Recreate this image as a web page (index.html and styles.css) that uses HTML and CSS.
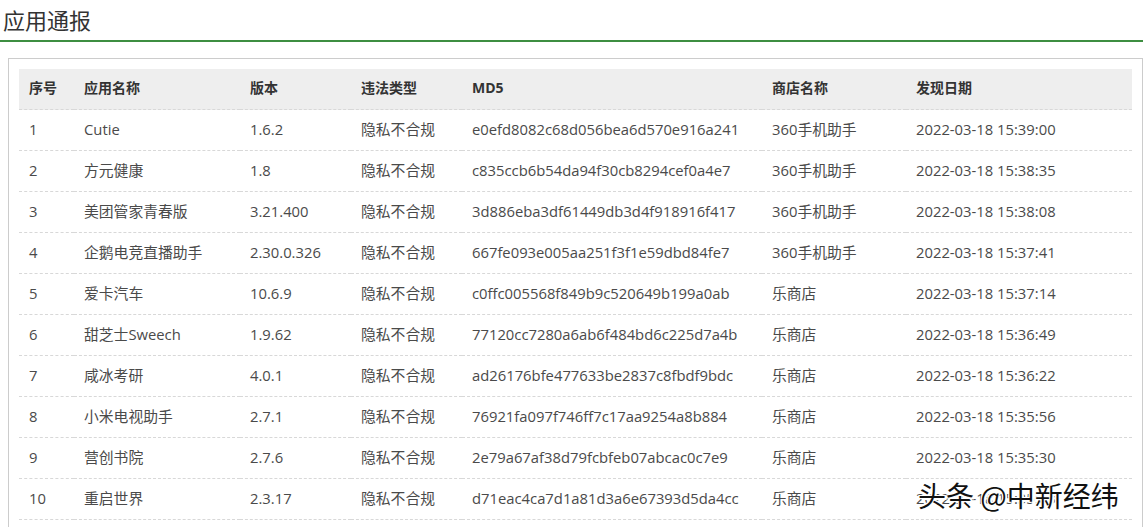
FILE: index.html
```html
<!DOCTYPE html>
<html lang="zh-CN">
<head>
<meta charset="utf-8">
<title>应用通报</title>
<link rel="stylesheet" href="styles.css">
</head>
<body>
<h2 class="page-title">应用通报</h2>
<div class="panel">
  <table class="report">
    <colgroup>
      <col class="c-no"><col class="c-name"><col class="c-ver"><col class="c-type"><col class="c-md5"><col class="c-store"><col class="c-date">
    </colgroup>
    <thead>
      <tr><th>序号</th><th>应用名称</th><th>版本</th><th>违法类型</th><th>MD5</th><th>商店名称</th><th>发现日期</th></tr>
    </thead>
    <tbody>
      <tr><td>1</td><td>Cutie</td><td>1.6.2</td><td>隐私不合规</td><td>e0efd8082c68d056bea6d570e916a241</td><td>360手机助手</td><td>2022-03-18 15:39:00</td></tr>
      <tr><td>2</td><td>方元健康</td><td>1.8</td><td>隐私不合规</td><td>c835ccb6b54da94f30cb8294cef0a4e7</td><td>360手机助手</td><td>2022-03-18 15:38:35</td></tr>
      <tr><td>3</td><td>美团管家青春版</td><td>3.21.400</td><td>隐私不合规</td><td>3d886eba3df61449db3d4f918916f417</td><td>360手机助手</td><td>2022-03-18 15:38:08</td></tr>
      <tr><td>4</td><td>企鹅电竞直播助手</td><td>2.30.0.326</td><td>隐私不合规</td><td>667fe093e005aa251f3f1e59dbd84fe7</td><td>360手机助手</td><td>2022-03-18 15:37:41</td></tr>
      <tr><td>5</td><td>爱卡汽车</td><td>10.6.9</td><td>隐私不合规</td><td>c0ffc005568f849b9c520649b199a0ab</td><td>乐商店</td><td>2022-03-18 15:37:14</td></tr>
      <tr><td>6</td><td>甜芝士Sweech</td><td>1.9.62</td><td>隐私不合规</td><td>77120cc7280a6ab6f484bd6c225d7a4b</td><td>乐商店</td><td>2022-03-18 15:36:49</td></tr>
      <tr><td>7</td><td>咸冰考研</td><td>4.0.1</td><td>隐私不合规</td><td>ad26176bfe477633be2837c8fbdf9bdc</td><td>乐商店</td><td>2022-03-18 15:36:22</td></tr>
      <tr><td>8</td><td>小米电视助手</td><td>2.7.1</td><td>隐私不合规</td><td>76921fa097f746ff7c17aa9254a8b884</td><td>乐商店</td><td>2022-03-18 15:35:56</td></tr>
      <tr><td>9</td><td>营创书院</td><td>2.7.6</td><td>隐私不合规</td><td>2e79a67af38d79fcbfeb07abcac0c7e9</td><td>乐商店</td><td>2022-03-18 15:35:30</td></tr>
      <tr><td>10</td><td>重启世界</td><td>2.3.17</td><td>隐私不合规</td><td>d71eac4ca7d1a81d3a6e67393d5da4cc</td><td>乐商店</td><td>2022-03-18 15:35:03</td></tr>
    </tbody>
  </table>
</div>
<div class="watermark">头条 @中新经纬</div>
</body>
</html>
```
FILE: styles.css
```css
html, body {
  margin: 0;
  padding: 0;
  background: #fff;
}
body {
  font-family: "Open Sans", "Noto Sans CJK SC", sans-serif;
  color: #444;
  position: relative;
  overflow: hidden;
  height: 527px;
}
.page-title {
  margin: 0 5px 0 0;
  padding: 4px 0 6px 3px;
  font-family: "Noto Sans CJK SC", sans-serif;
  font-size: 22px;
  font-weight: normal;
  line-height: 30px;
  color: #333;
  border-bottom: 2px solid #3e8e41;
}
.panel {
  margin: 16px 5px 0 8px;
  border: 1px solid #ccc;
  padding: 10px;
}
.report {
  width: 1113px;
  border-collapse: collapse;
  table-layout: fixed;
  font-size: 14.8px;
}
.c-no { width: 55px; }
.c-name { width: 166px; }
.c-ver { width: 111px; }
.c-type { width: 111px; }
.c-md5 { width: 300px; }
.c-store { width: 144px; }
.c-date { width: 226px; }
.report th, .report td {
  text-align: left;
  padding: 0 0 2px 10px;
  height: 38px;
  line-height: 20px;
  border-bottom: 1px dashed #d8d8d8;
  white-space: nowrap;
}
.report th {
  background: #eee;
  color: #333;
  font-weight: bold;
  font-size: 14px;
}
.report td {
  color: #4a4a4a;
}
.watermark {
  position: absolute;
  left: 918px;
  top: 477px;
  font-family: "Noto Sans CJK SC", sans-serif;
  font-size: 28px;
  line-height: 36px;
  color: #111;
  text-shadow: 2px 2px 0 #fff, -1px -1px 0 #fff, 1px -1px 0 #fff, -1px 1px 0 #fff;
}
```
